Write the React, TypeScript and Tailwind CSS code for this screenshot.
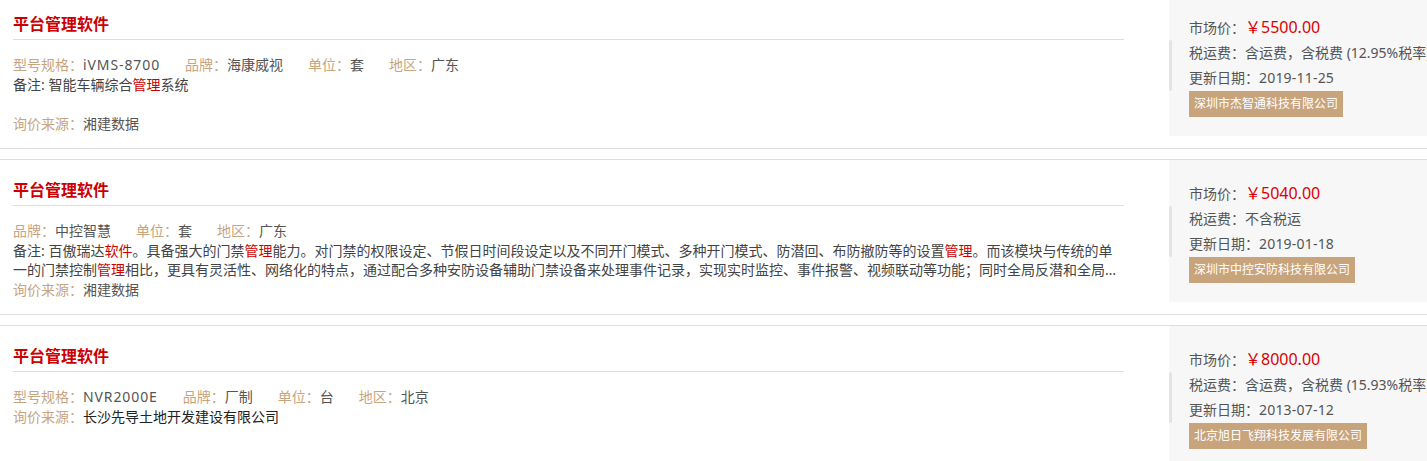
import React from "react";

type Seg = { t: string; hl?: boolean };

type Item = {
  specs: { label: string; value: string; latin?: boolean }[];
  note?: Seg[];
  source: string;
  sourceDark?: boolean;
  price: string;
  tax: string;
  date: string;
  company: string;
};

const items: Item[] = [
  {
    specs: [
      { label: "型号规格：", value: "iVMS-8700", latin: true },
      { label: "品牌：", value: "海康威视" },
      { label: "单位：", value: "套" },
      { label: "地区：", value: "广东" },
    ],
    note: [{ t: "智能车辆综合" }, { t: "管理", hl: true }, { t: "系统" }],
    source: "湘建数据",
    price: "￥5500.00",
    tax: "含运费，含税费 (12.95%税率)",
    date: "2019-11-25",
    company: "深圳市杰智通科技有限公司",
  },
  {
    specs: [
      { label: "品牌：", value: "中控智慧" },
      { label: "单位：", value: "套" },
      { label: "地区：", value: "广东" },
    ],
    note: [
      { t: "百傲瑞达" },
      { t: "软件", hl: true },
      { t: "。具备强大的门禁" },
      { t: "管理", hl: true },
      {
        t: "能力。对门禁的权限设定、节假日时间段设定以及不同开门模式、多种开门模式、防潜回、布防撤防等的设置",
      },
      { t: "管理", hl: true },
      { t: "。而该模块与传统的单一的门禁控制" },
      { t: "管理", hl: true },
      {
        t: "相比，更具有灵活性、网络化的特点，通过配合多种安防设备辅助门禁设备来处理事件记录，实现实时监控、事件报警、视频联动等功能；同时全局反潜和全局互锁功能，满足更高安全级别的需求。",
      },
    ],
    source: "湘建数据",
    price: "￥5040.00",
    tax: "不含税运",
    date: "2019-01-18",
    company: "深圳市中控安防科技有限公司",
  },
  {
    specs: [
      { label: "型号规格：", value: "NVR2000E", latin: true },
      { label: "品牌：", value: "厂制" },
      { label: "单位：", value: "台" },
      { label: "地区：", value: "北京" },
    ],
    source: "长沙先导土地开发建设有限公司",
    sourceDark: true,
    price: "￥8000.00",
    tax: "含运费，含税费 (15.93%税率)",
    date: "2013-07-12",
    company: "北京旭日飞翔科技发展有限公司",
  },
];

function Row({ item, first }: { item: Item; first: boolean }) {
  return (
    <div
      className={`flex border-y border-[#dedede] ${first ? "-mt-[7px]" : "mt-[10px]"}`}
    >
      <div className="w-[1124px] shrink-0 pl-[13px] pt-[18px] pb-[14px]">
        <div className="border-b border-[#dedede] pb-[3px] text-[16px] font-bold leading-[24px] text-[#cc0000]">
          平台管理软件
        </div>
        <div className="mt-[15px] flex text-[14px] leading-[20px]">
          {item.specs.map((s, i) => (
            <span key={i} className="mr-[25px] whitespace-nowrap">
              <span className="text-[#c8a47e]">{s.label}</span>
              <span
                className={
                  s.latin ? "tracking-[0.9px] text-[#555555]" : "text-[#555555]"
                }
              >
                {s.value}
              </span>
            </span>
          ))}
        </div>
        {item.note && (
          <div className="h-[39px] overflow-hidden text-[14px] leading-[19px] text-[#444444]">
            <div className="line-clamp-2">
              备注:{" "}
              {item.note.map((n, i) =>
                n.hl ? (
                  <span key={i} className="text-[#cc0000]">
                    {n.t}
                  </span>
                ) : (
                  <span key={i}>{n.t}</span>
                )
              )}
            </div>
          </div>
        )}
        <div className="text-[14px] leading-[20px]">
          <span className="text-[#c8a47e]">询价来源：</span>
          <span className={item.sourceDark ? "text-[#222222]" : "text-[#555555]"}>
            {item.source}
          </span>
        </div>
      </div>
      <div className="ml-[45px] w-[320px] shrink-0 self-start">
        <div className="relative mb-[12px] h-[142px] bg-[#f7f7f7] pl-[20px] pt-[21px] text-[14px] leading-[25px] text-[#555555]">
          <div className="absolute left-0 top-[46px] h-[51px] w-[3px] rounded-full bg-[#e4e4e4]" />
          <div className="whitespace-nowrap">
            市场价：<span className="text-[16px] text-[#dd0000]">{item.price}</span>
          </div>
          <div className="whitespace-nowrap">税运费：{item.tax}</div>
          <div className="whitespace-nowrap">
            更新日期：<span className="tracking-[0.2px]">{item.date}</span>
          </div>
          <div className="inline-block h-[26px] bg-[#c8a47c] px-[5px] text-[12px] leading-[26px] whitespace-nowrap text-white">
            {item.company}
          </div>
        </div>
      </div>
    </div>
  );
}

export default function App() {
  return (
    <div
      className="h-[461px] w-full overflow-hidden bg-white"
      style={{ fontFamily: '"Noto Sans", "Noto Sans CJK SC", sans-serif' }}
    >
      <div className="w-[1500px]">
        {items.map((it, i) => (
          <Row key={i} item={it} first={i === 0} />
        ))}
      </div>
    </div>
  );
}
